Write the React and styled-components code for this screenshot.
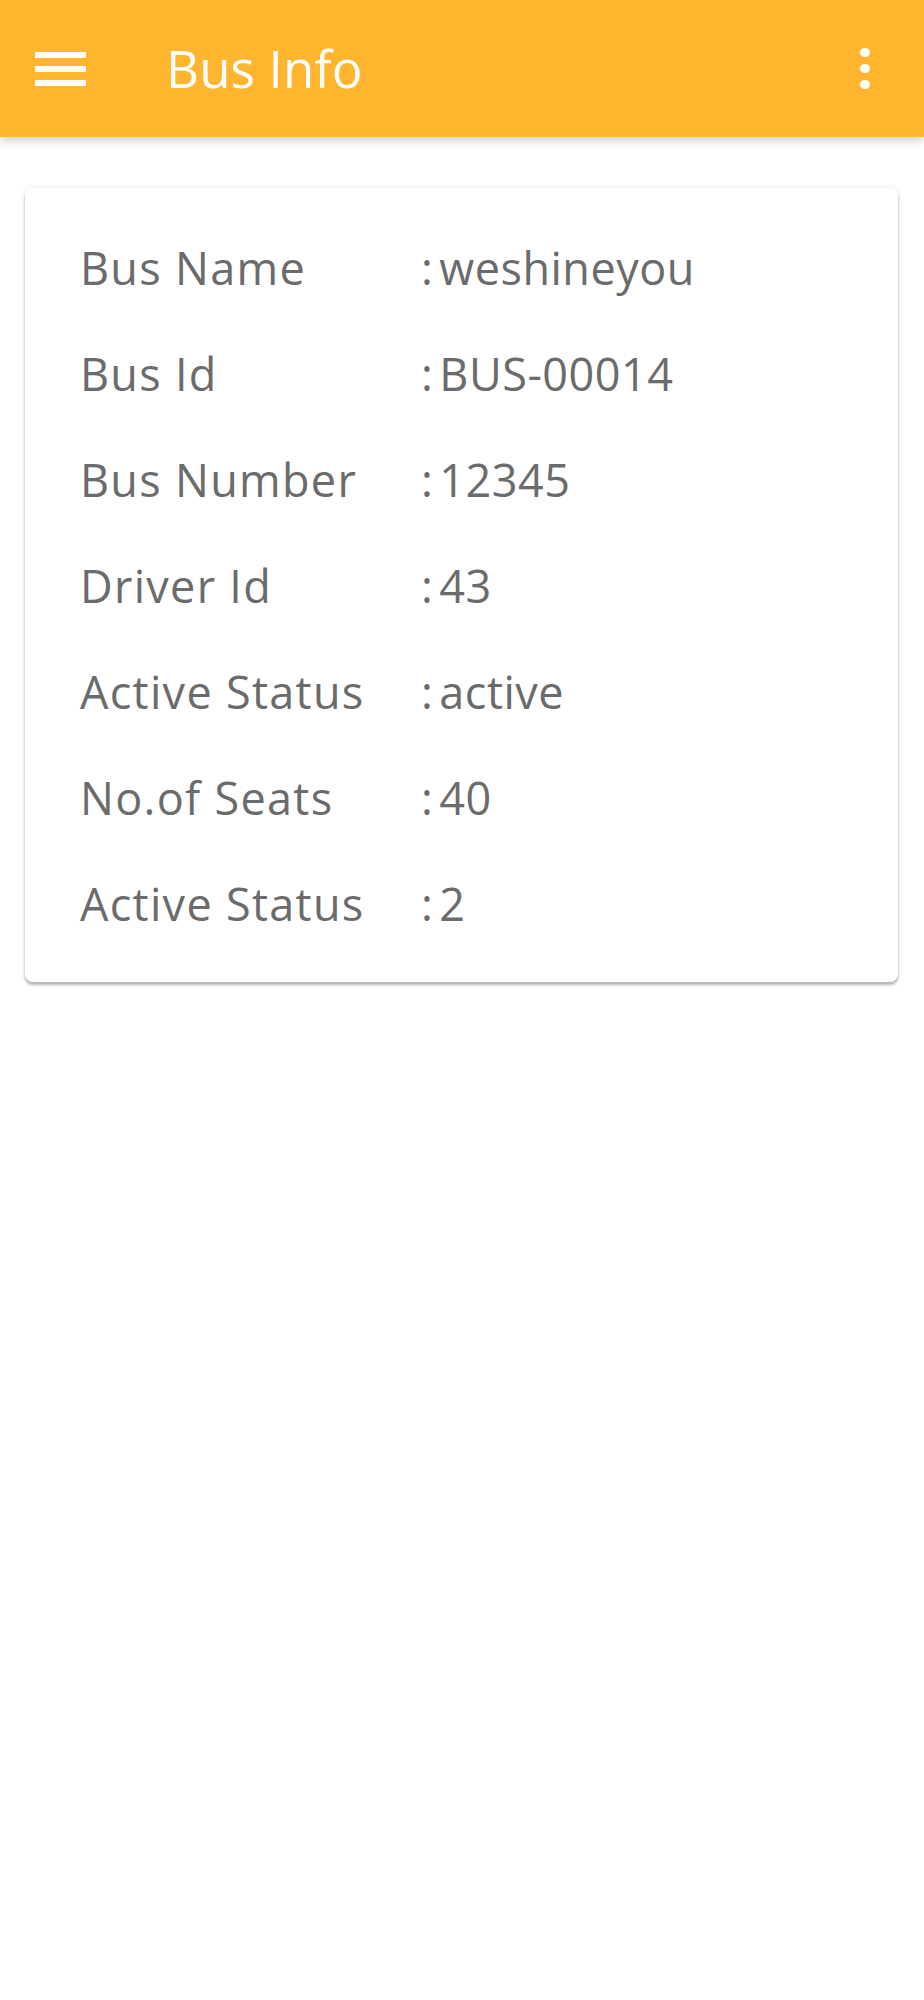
import React from 'react';
import styled, { createGlobalStyle } from 'styled-components';

const GlobalStyle = createGlobalStyle`
  body {
    margin: 0;
    background: #ffffff;
    font-family: "Open Sans", "Liberation Sans", sans-serif;
  }
`

const Screen = styled.div`
  width: 924px;
  min-height: 2000px;
  background: #ffffff;
`

const AppBar = styled.header`
  position: relative;
  display: flex;
  align-items: center;
  height: 137px;
  padding: 0 0 0 35px;
  background-color: #ffb52e;
  box-shadow: 0 3px 10px rgba(0, 0, 0, 0.22);
  box-sizing: border-box;
`

const MenuButton = styled.div`
  display: flex;
  flex-direction: column;
  gap: 8px;
  width: 51px;
`

const MenuBar = styled.span`
  display: block;
  height: 6px;
  background: #ffffff;
`

const Title = styled.h1`
  flex: 1;
  margin: 0 0 0 80px;
  font-size: 51px;
  font-weight: 400;
  color: #ffffff;
  line-height: 1;
  letter-spacing: 0.2px;
`

const MoreButton = styled.div`
  display: flex;
  flex-direction: column;
  align-items: center;
  gap: 6.5px;
  width: 10px;
  margin-right: 54px;
`

const Dot = styled.span`
  display: block;
  width: 9.5px;
  height: 9.5px;
  border-radius: 50%;
  background: #ffffff;
`

const Content = styled.main`
  padding: 51px 26px 0 25px;
`

const Card = styled.section`
  padding: 26px 0 26px 55px;
  background: #ffffff;
  border-radius: 8px;
  box-shadow: 0 3px 3px rgba(0, 0, 0, 0.28), 0 0 6px rgba(0, 0, 0, 0.08);
`

const Row = styled.div`
  display: grid;
  grid-template-columns: 341px 1fr;
  height: 106px;
  align-items: center;
  font-size: 45px;
  color: #6b6b6b;
  line-height: 1;
`

const Label = styled.span`
  letter-spacing: 1.3px;
`

const Value = styled.span`
  letter-spacing: 0.5px;
`

const Colon = styled.span`
  margin-right: 6px;
`

const details = [
  ['Bus Name', 'weshineyou'],
  ['Bus Id', 'BUS-00014'],
  ['Bus Number', '12345'],
  ['Driver Id', '43'],
  ['Active Status', 'active'],
  ['No.of Seats', '40'],
  ['Active Status', '2'],
]

export default class App extends React.Component {
  render() {
    return (
      <Screen>
        <GlobalStyle />
        <AppBar>
          <MenuButton>
            <MenuBar />
            <MenuBar />
            <MenuBar />
          </MenuButton>
          <Title>Bus Info</Title>
          <MoreButton>
            <Dot />
            <Dot />
            <Dot />
          </MoreButton>
        </AppBar>
        <Content>
          <Card>
            {details.map(([label, value], index) => (
              <Row key={index}>
                <Label>{label}</Label>
                <Value><Colon>:</Colon>{value}</Value>
              </Row>
            ))}
          </Card>
        </Content>
      </Screen>
    )
  }
}
